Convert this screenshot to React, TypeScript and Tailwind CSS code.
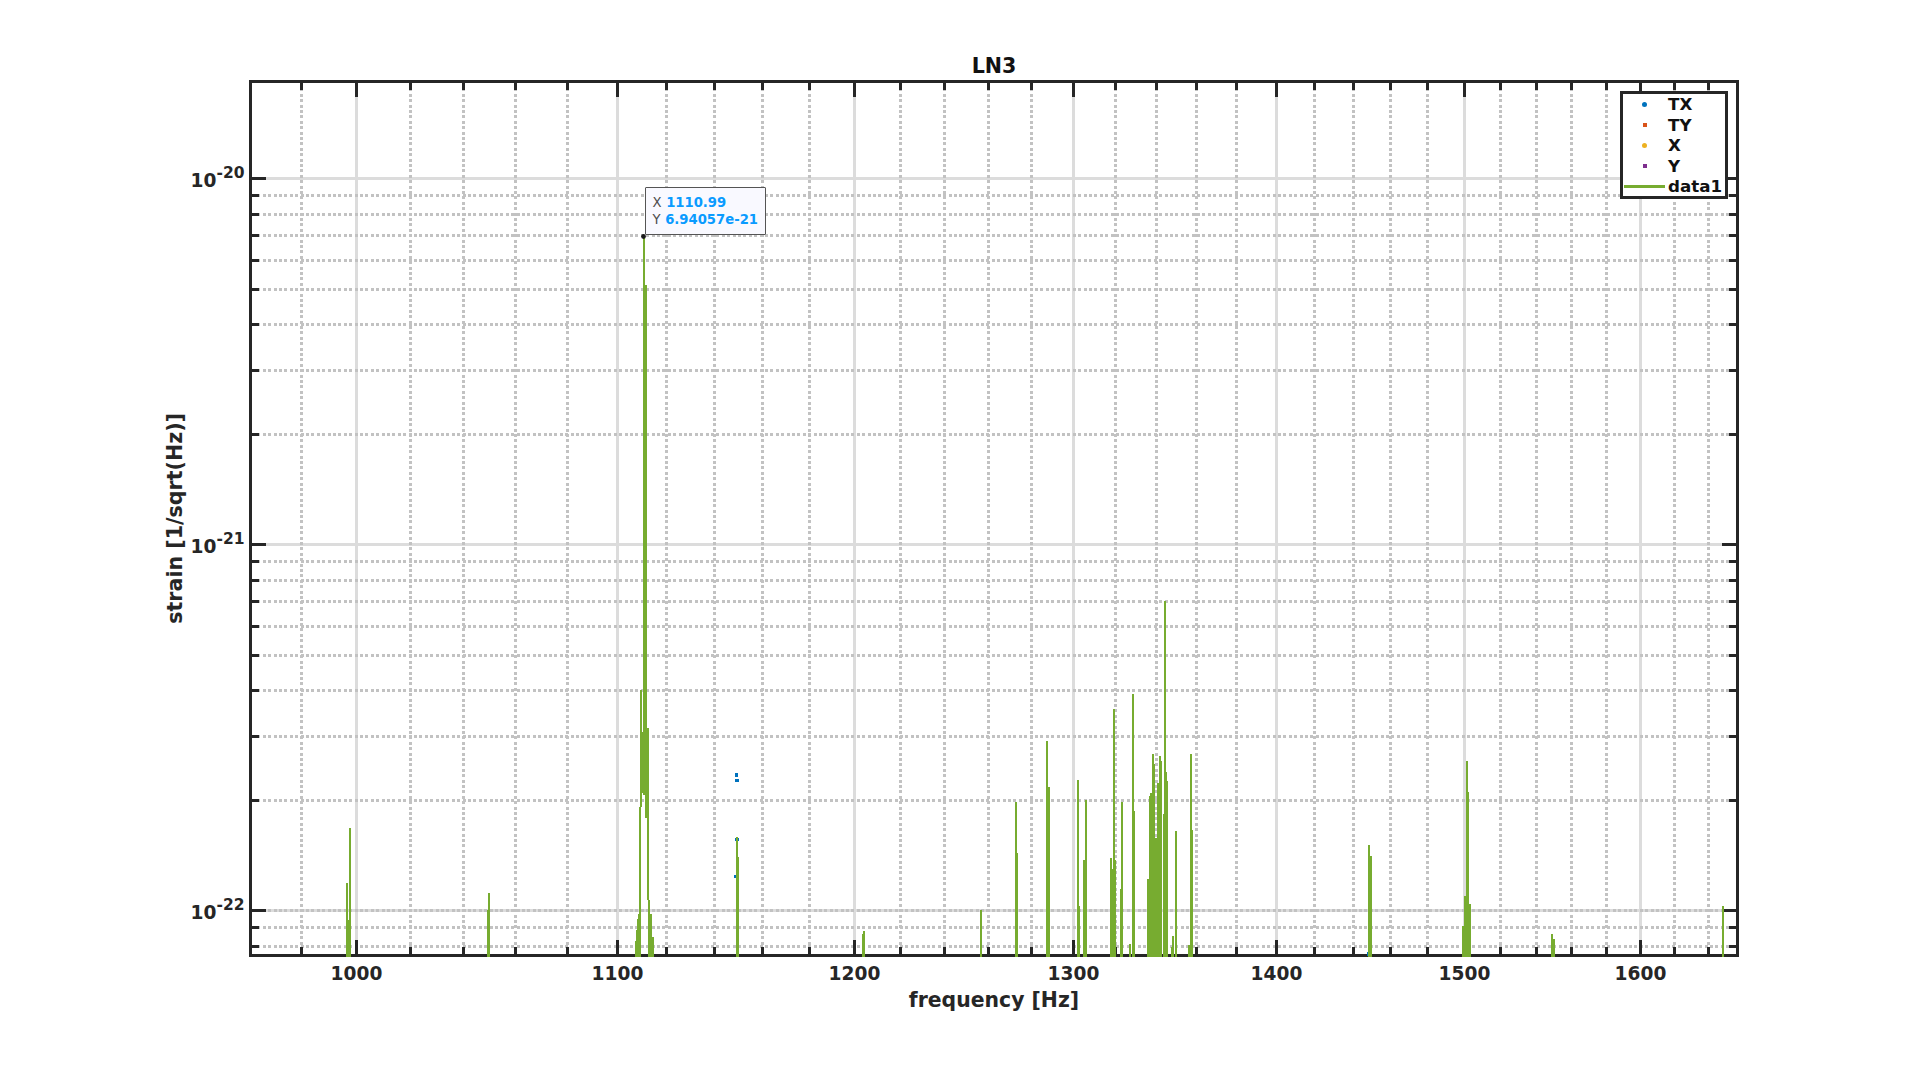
const X0 = 186;
const Y0 = 76;
const fx = (f: number) => Math.round(356.3 + 6291 * Math.log10(f / 1000));
const fy = (e: number) => Math.round(178.4 + 366 * (-20 - e));

const majorX = [1000, 1100, 1200, 1300, 1400, 1500, 1600];
const minorX: number[] = [];
for (let f = 980; f <= 1640; f += 20) if (f % 100 !== 0) minorX.push(f);
const majorY = [-20, -21, -22];
const minorY: number[] = [];
for (const d of [-21, -22]) for (let m = 2; m <= 9; m++) minorY.push(Math.log10(m) + d);
minorY.push(Math.log10(8) - 23, Math.log10(9) - 23);

const AXIS = "#262626";
const GREEN = "#77ac30";
const B = 956.5;

// x0, x1, top, bottom
const bars: [number, number, number, number?][] = [
  [346, 348, 883],
  [348, 349, 920],
  [349, 351, 828],
  [488, 490, 893],
  [487, 489, 910],
  [635, 637, 941],
  [636, 638, 930],
  [637, 639, 919],
  [638, 640, 914],
  [639, 641, 807],
  [640, 642, 690, 807],
  [641, 643, 732, 793],
  [643, 645, 237, 795],
  [644, 647, 285, 795],
  [645, 647, 723, 818],
  [647, 649, 728, 900],
  [648, 650, 900],
  [650, 652, 914],
  [652, 654, 937],
  [736, 738, 837],
  [737, 739, 857],
  [862, 864, 934],
  [863, 865, 931],
  [980, 982, 910],
  [1015, 1017, 802],
  [1016, 1018, 853],
  [1046, 1048, 741],
  [1048, 1050, 787],
  [1077, 1079, 780],
  [1078, 1080, 906],
  [1083, 1085, 860],
  [1085, 1087, 800],
  [1110, 1112, 858],
  [1112, 1113, 869],
  [1113, 1115, 709],
  [1115, 1116, 860],
  [1120, 1121, 889],
  [1121, 1123, 802],
  [1129, 1131, 944],
  [1132, 1134, 694],
  [1134, 1135, 811],
  [1147, 1149, 879],
  [1149, 1150, 796],
  [1150, 1152, 793],
  [1152, 1154, 754],
  [1154, 1155, 764],
  [1155, 1157, 838],
  [1157, 1159, 783],
  [1159, 1161, 756],
  [1161, 1162, 761],
  [1163, 1164, 814],
  [1164, 1166, 601],
  [1166, 1167, 772],
  [1167, 1168, 781],
  [1171, 1173, 947],
  [1172, 1174, 936],
  [1175, 1177, 831],
  [1188, 1190, 945],
  [1190, 1192, 754],
  [1192, 1193, 830],
  [1368, 1370, 845],
  [1370, 1372, 856],
  [1462, 1464, 926],
  [1464, 1466, 896],
  [1466, 1468, 761],
  [1467, 1469, 792],
  [1469, 1471, 904],
  [1551, 1553, 934],
  [1553, 1555, 939],
  [1722, 1724, 906],
];

const dots: [number, number, number, number][] = [
  [735, 773, 3, 4],
  [735, 779, 4, 3],
  [735, 838, 4, 3],
  [734, 875, 2, 3],
  [1367, 952, 2, 4],
];

const legend: { label: string; kind: "dot" | "sq" | "line"; color: string }[] = [
  { label: "TX", kind: "dot", color: "bg-[#0072bd]" },
  { label: "TY", kind: "sq", color: "bg-[#d95319]" },
  { label: "X", kind: "dot", color: "bg-[#edb120]" },
  { label: "Y", kind: "sq", color: "bg-[#7e2f8e]" },
  { label: "data1", kind: "line", color: "bg-[#77ac30]" },
];

function Chart() {
  return (
    <svg
      className="absolute inset-0 w-full h-full"
      viewBox={`${X0} ${Y0} 1559 914`}
      width={1559}
      height={914}
    >
      <g shapeRendering="crispEdges">
        {/* major grid */}
        {majorX.map((f) => (
          <line key={f} x1={fx(f) + 0.5} x2={fx(f) + 0.5} y1={83} y2={954} stroke="#dcdcdc" strokeWidth={3} />
        ))}
        {majorY.map((e) => (
          <line key={e} x1={252} x2={1736} y1={fy(e) + 0.5} y2={fy(e) + 0.5} stroke="#dcdcdc" strokeWidth={3} />
        ))}
        {/* minor grid */}
        {minorX.map((f) => (
          <line key={f} x1={fx(f) + 0.5} x2={fx(f) + 0.5} y1={83} y2={954} stroke="#c2c2c2" strokeWidth={3} strokeDasharray="3 2.4" />
        ))}
        {[...minorY, -22].map((e) => (
          <line key={e} x1={252} x2={1736} y1={fy(e) + 0.5} y2={fy(e) + 0.5} stroke="#c2c2c2" strokeWidth={3} strokeDasharray="3 2.4" />
        ))}
        {/* ticks */}
        <g stroke={AXIS} strokeWidth={3}>
          {majorX.map((f) => (
            <g key={f}>
              <line x1={fx(f) + 0.5} x2={fx(f) + 0.5} y1={83} y2={97} />
              <line x1={fx(f) + 0.5} x2={fx(f) + 0.5} y1={954} y2={940} />
            </g>
          ))}
          {minorX.map((f) => (
            <g key={f}>
              <line x1={fx(f) + 0.5} x2={fx(f) + 0.5} y1={83} y2={90} />
              <line x1={fx(f) + 0.5} x2={fx(f) + 0.5} y1={954} y2={947} />
            </g>
          ))}
          {majorY.map((e) => (
            <g key={e}>
              <line x1={252} x2={266} y1={fy(e) + 0.5} y2={fy(e) + 0.5} />
              <line x1={1736} x2={1722} y1={fy(e) + 0.5} y2={fy(e) + 0.5} />
            </g>
          ))}
          {minorY.map((e) => (
            <g key={e}>
              <line x1={252} x2={259} y1={fy(e) + 0.5} y2={fy(e) + 0.5} />
              <line x1={1736} x2={1729} y1={fy(e) + 0.5} y2={fy(e) + 0.5} />
            </g>
          ))}
        </g>
        {/* axes box */}
        <rect x={250.5} y={81.5} width={1487} height={874} fill="none" stroke={AXIS} strokeWidth={3} />
        {/* data */}
        {dots.map(([x, y, w, h]) => (
          <rect key={`${x}-${y}`} x={x} y={y} width={w} height={h} fill="#0072bd" />
        ))}
        {bars.map(([x0, x1, t, b]) => (
          <rect key={`${x0}-${t}`} x={x0} y={t} width={x1 - x0} height={(b ?? B) - t} fill={GREEN} />
        ))}
      </g>
      {/* tick labels */}
      <g fill={AXIS}>
        {majorX.map((f) => (
          <text key={f} x={fx(f) + 0.5} y={980} textAnchor="middle" fontSize={18.6}>
            {f}
          </text>
        ))}
        {majorY.map((e) => (
          <text key={e} x={244.5} y={fy(e) + 8.5} textAnchor="end" fontSize={18.6}>
            10
            <tspan fontSize={15.5} dy={-8.4}>
              {e}
            </tspan>
          </text>
        ))}
      </g>
      <circle cx={643.5} cy={236.5} r={2.4} fill="#1a1a1a" />
    </svg>
  );
}

function Legend() {
  return (
    <div className="absolute left-[1434px] top-[15px] w-[108px] h-[107.5px] bg-white border-[3px] border-[#262626] flex flex-col text-[16.7px] text-[#111111]">
      {legend.map((l) => (
        <div key={l.label} className="flex items-center h-[20.5px] shrink-0">
          <div className="w-[42px] pl-px flex items-center justify-center">
            {l.kind === "line" ? (
              <div className={`w-[41px] h-[3px] ${l.color}`} />
            ) : l.kind === "dot" ? (
              <div className={`w-[4.5px] h-[4.5px] rounded-full ${l.color}`} />
            ) : (
              <div className={`w-[4px] h-[3.5px] ${l.color}`} />
            )}
          </div>
          <span className="ml-[3px] leading-[20px]">{l.label}</span>
        </div>
      ))}
    </div>
  );
}

function DataTip() {
  return (
    <div className="absolute left-[459px] top-[111px] w-[121px] h-[47.5px] bg-[#f9f9ff] border border-[#555555] rounded-[1px] pl-[6.5px] pt-[6px] text-[13.2px] leading-[17.4px] text-[#0a9bff] whitespace-nowrap">
      <div>
        <span className="font-normal text-[#4d4d4d]">X</span> 1110.99
      </div>
      <div>
        <span className="font-normal text-[#4d4d4d]">Y</span> 6.94057e-21
      </div>
    </div>
  );
}

export default function App() {
  return (
    <div className="w-[1920px] h-[1074px] bg-white flex flex-col overflow-hidden font-['DejaVu_Sans',sans-serif] font-bold text-[#262626]">
      <h1 className="ml-[250px] w-[1488px] mt-[54px] h-[22px] leading-[24px] text-center text-[20.6px] text-[#111111]">
        LN3
      </h1>
      <div className="flex pl-[164px]">
        <div className="w-[22px] h-[885px] flex items-center justify-center">
          <span className="[writing-mode:vertical-rl] rotate-180 text-[20.6px] leading-[22px] whitespace-nowrap">
            strain [1/sqrt(Hz)]
          </span>
        </div>
        <div className="relative w-[1559px] h-[914px]">
          <Chart />
          <Legend />
          <DataTip />
        </div>
      </div>
      <div className="ml-[250px] w-[1488px] h-[28px] leading-[20px] text-center text-[20.4px]">
        frequency [Hz]
      </div>
    </div>
  );
}
